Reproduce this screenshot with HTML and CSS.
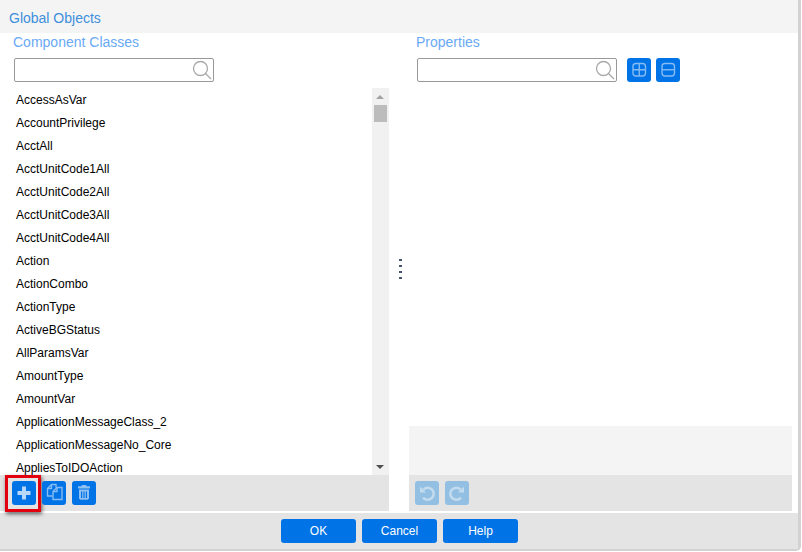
FILE: index.html
```html
<!DOCTYPE html>
<html>

<head>
    <meta charset="UTF-8">
    <title>Global Objects</title>
    <link rel="stylesheet" href="styles.css">
</head>

<body>
    <div class="dialog">
        <div class="dialog-title">Global Objects</div>
        <div class="dialog-body">
            <div class="left-pane">
                <h2 class="pane-title">Component Classes</h2>
                <div class="search-row">
                    <div class="search-box">
                        <svg class="search-icon" viewBox="0 0 20 20"><circle cx="8.5" cy="8.5" r="7" /><path d="M13.5 13.5L19 19" /></svg>
                    </div>
                </div>
                <div class="list-wrap">
                    <ul class="class-list">
                        <li>AccessAsVar</li>
                        <li>AccountPrivilege</li>
                        <li>AcctAll</li>
                        <li>AcctUnitCode1All</li>
                        <li>AcctUnitCode2All</li>
                        <li>AcctUnitCode3All</li>
                        <li>AcctUnitCode4All</li>
                        <li>Action</li>
                        <li>ActionCombo</li>
                        <li>ActionType</li>
                        <li>ActiveBGStatus</li>
                        <li>AllParamsVar</li>
                        <li>AmountType</li>
                        <li>AmountVar</li>
                        <li>ApplicationMessageClass_2</li>
                        <li>ApplicationMessageNo_Core</li>
                        <li>AppliesToIDOAction</li>
                    </ul>
                    <div class="scrollbar">
                        <span class="arrow-up"></span>
                        <span class="thumb"></span>
                        <span class="arrow-down"></span>
                    </div>
                </div>
                <div class="toolbar left-toolbar">
                    <button class="icon-btn highlighted">
                        <svg viewBox="0 0 24 24"><path class="fill" d="M10 5.500h4v4.500h4.500v4H14v4.500h-4V14H5.500v-4H10z" /></svg>
                    </button>
                    <button class="icon-btn">
                        <svg viewBox="0 0 24 24"><path class="line" d="M10.500 15H5.500V7.500L9.500 3.500H14V6.500" /><path class="line" d="M9.500 3.500V7.500H5.500" /><path class="line" d="M11 10.500L15 6.500H20V18.500H11z" /><path class="line" d="M15 6.500V10.500H11" /></svg>
                    </button>
                    <button class="icon-btn">
                        <svg viewBox="0 0 24 24"><path class="fill" fill-rule="evenodd" d="M10 4h4l.8 1.300H18V7.500H6V5.300H9.200zM7 8.500h10V17.500L15.800 18.800H8.200L7 17.500zM9 10.500V17h1.200V10.500zM11.400 10.500V17h1.200V10.500zM13.800 10.500V17H15V10.500z" /></svg>
                    </button>
                </div>
            </div>
            <div class="splitter">
                <span></span><span></span><span></span><span></span>
            </div>
            <div class="right-pane">
                <h2 class="pane-title">Properties</h2>
                <div class="search-row">
                    <div class="search-box">
                        <svg class="search-icon" viewBox="0 0 20 20"><circle cx="8.5" cy="8.5" r="7" /><path d="M13.5 13.5L19 19" /></svg>
                    </div>
                    <button class="icon-btn">
                        <svg viewBox="0 0 24 24"><rect class="line" x="6" y="5.500" width="12.500" height="12.500" rx="3" /><path class="line" d="M12.250 5.500v12.500M6 11.750h12.500" /></svg>
                    </button>
                    <button class="icon-btn">
                        <svg viewBox="0 0 24 24"><rect class="line" x="6" y="5.500" width="12.500" height="12.500" rx="3" /><path class="line" d="M6 11.750h12.500" /></svg>
                    </button>
                </div>
                <div class="props-area"></div>
                <div class="props-detail"></div>
                <div class="toolbar right-toolbar">
                    <button class="icon-btn disabled">
                        <svg viewBox="0 0 24 24"><path class="arc" d="M8.500 8.500A6 6 0 1 1 8 16.500" /><path class="fill" d="M5 5.500l6 6H5z" /></svg>
                    </button>
                    <button class="icon-btn disabled">
                        <svg viewBox="0 0 24 24"><path class="arc" d="M15.500 8.500A6 6 0 1 0 16 16.500" /><path class="fill" d="M19 5.500l-6 6h6z" /></svg>
                    </button>
                </div>
            </div>
        </div>
        <div class="dialog-footer">
            <button class="text-btn">OK</button>
            <button class="text-btn">Cancel</button>
            <button class="text-btn">Help</button>
        </div>
    </div>
</body>

</html>
```

FILE: styles.css
```css
html, body {
    margin: 0;
    padding: 0;
    background-color: #fff;
}

body {
    width: 802px;
    height: 552px;
    overflow: hidden;
}

.dialog {
    display: flex;
    flex-direction: column;
    width: 801px;
    height: 551px;
    box-sizing: border-box;
    border-right: 3px solid #d2d2d2;
    border-bottom: 2px solid #d2d2d2;
    border-bottom-right-radius: 5px;
    font-family: "Liberation Sans", Arial, sans-serif;
    overflow: hidden;
}

.dialog-title {
    height: 33px;
    flex: none;
    box-sizing: border-box;
    padding: 10px 0 0 9px;
    background-color: #f4f4f4;
    color: #3d8fdc;
    font-size: 14px;
    line-height: 16px;
}

.dialog-body {
    display: flex;
    height: 478px;
    flex: none;
}

.left-pane {
    display: flex;
    flex-direction: column;
    width: 389px;
    flex: none;
}

.right-pane {
    display: flex;
    flex-direction: column;
    width: 383px;
    flex: none;
}

.pane-title {
    height: 25px;
    margin: 0;
    padding: 1px 0 0 13px;
    box-sizing: border-box;
    color: #69a9f5;
    font-size: 14px;
    font-weight: normal;
    line-height: 16px;
}

.right-pane .pane-title {
    padding-left: 7px;
}

.search-row {
    display: flex;
    height: 30px;
    flex: none;
    gap: 10px;
    padding-left: 14px;
}

.right-pane .search-row {
    padding-left: 8px;
}

.right-pane .search-row .icon-btn + .icon-btn {
    margin-left: -5px;
}

.search-box {
    display: flex;
    justify-content: flex-end;
    align-items: center;
    width: 200px;
    height: 24px;
    box-sizing: border-box;
    padding-right: 1px;
    border: 1px solid #999;
    border-radius: 2px;
    background-color: #fff;
}

.search-icon {
    width: 20px;
    height: 20px;
    fill: none;
    stroke: #a8a8a8;
    stroke-width: 1.300;
}

.list-wrap {
    display: flex;
    height: 387px;
    flex: none;
}

.class-list {
    flex: 1;
    margin: 0;
    padding: 1px 0 0;
    overflow: hidden;
    list-style: none;
}

.class-list li {
    height: 23px;
    padding-left: 16px;
    color: #000;
    font-size: 12px;
    line-height: 23px;
}

.scrollbar {
    position: relative;
    width: 17px;
    flex: none;
    background-color: #f1f1f1;
}

.arrow-up,
.arrow-down {
    position: absolute;
    left: 4px;
    width: 0;
    height: 0;
    border-left: 4px solid transparent;
    border-right: 4px solid transparent;
}

.arrow-up {
    top: 7px;
    border-bottom: 4px solid #a3a3a3;
}

.arrow-down {
    bottom: 6px;
    border-top: 4px solid #505050;
}

.thumb {
    position: absolute;
    top: 17px;
    left: 2px;
    width: 13px;
    height: 17px;
    background-color: #bcbcbc;
}

.toolbar {
    display: flex;
    height: 36px;
    flex: none;
    gap: 6px;
    box-sizing: border-box;
    background-color: #e4e4e4;
}

.left-toolbar {
    padding: 6px 0 0 12px;
}

.right-toolbar {
    padding: 6px 0 0 6px;
}

.icon-btn {
    position: relative;
    display: block;
    width: 24px;
    height: 24px;
    flex: none;
    padding: 0;
    border: none;
    border-radius: 3px;
    background-color: #0073e6;
}

.icon-btn svg {
    display: block;
    width: 24px;
    height: 24px;
}

.icon-btn .fill {
    fill: #8fc0f2;
}

.icon-btn .line {
    fill: none;
    stroke: #86bbf3;
    stroke-width: 1.400;
}

.icon-btn .arc {
    fill: none;
    stroke: #c3dbee;
    stroke-width: 2.600;
}

.highlighted .fill {
    fill: #b9d8f9;
}

/* red marker drawn on top of the screenshot */
.highlighted::after {
    content: "";
    position: absolute;
    top: -6px;
    left: -7px;
    width: 30px;
    height: 31px;
    border: 3px solid #e3000f;
    box-shadow: 1px 2px 4px rgba(0, 0, 0, 0.6);
}

.disabled {
    background-color: #92bfe2;
}

.disabled .fill {
    fill: #c3dbee;
}

.splitter {
    display: flex;
    flex-direction: column;
    align-items: center;
    gap: 4px;
    width: 20px;
    flex: none;
    padding: 226px 0 0 3px;
    box-sizing: border-box;
}

.splitter span {
    width: 3px;
    height: 2px;
    background-color: #44546a;
}

.props-area {
    height: 338px;
    flex: none;
}

.props-detail {
    height: 49px;
    flex: none;
    background-color: #f4f4f4;
}

.dialog-footer {
    display: flex;
    flex: 1;
    justify-content: center;
    align-items: center;
    gap: 6px;
    margin-top: 2px;
    padding-left: 1px;
    background-color: #e4e4e4;
}

.text-btn {
    width: 75px;
    height: 24px;
    padding: 0;
    border: none;
    border-radius: 3px;
    background-color: #0073e6;
    color: #fff;
    font-family: "Liberation Sans", Arial, sans-serif;
    font-size: 12px;
}
```
